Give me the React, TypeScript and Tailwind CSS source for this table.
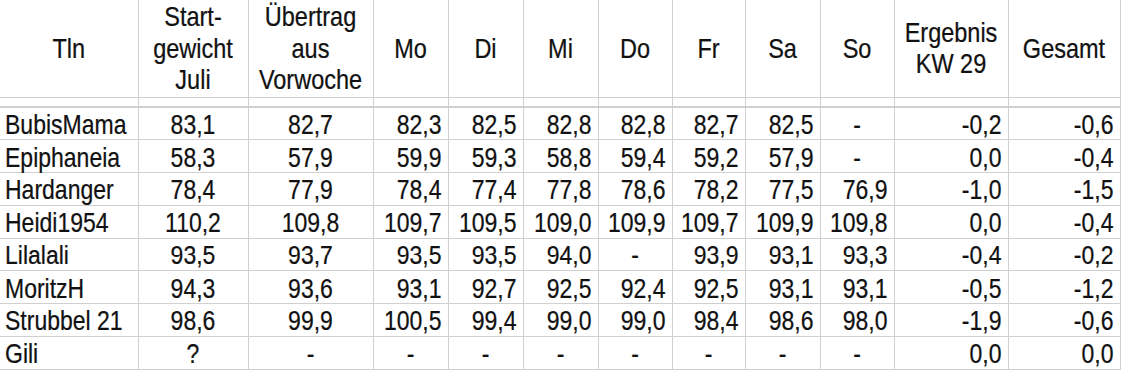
import React from 'react';

type Cell = string;

const widths = [138, 110, 125, 75, 75, 75, 74, 73, 75, 74, 114, 112];

const rows: Cell[][] = [
  ['BubisMama', '83,1', '82,7', '82,3', '82,5', '82,8', '82,8', '82,7', '82,5', '-', '-0,2', '-0,6'],
  ['Epiphaneia', '58,3', '57,9', '59,9', '59,3', '58,8', '59,4', '59,2', '57,9', '-', '0,0', '-0,4'],
  ['Hardanger', '78,4', '77,9', '78,4', '77,4', '77,8', '78,6', '78,2', '77,5', '76,9', '-1,0', '-1,5'],
  ['Heidi1954', '110,2', '109,8', '109,7', '109,5', '109,0', '109,9', '109,7', '109,9', '109,8', '0,0', '-0,4'],
  ['Lilalali', '93,5', '93,7', '93,5', '93,5', '94,0', '-', '93,9', '93,1', '93,3', '-0,4', '-0,2'],
  ['MoritzH', '94,3', '93,6', '93,1', '92,7', '92,5', '92,4', '92,5', '93,1', '93,1', '-0,5', '-1,2'],
  ['Strubbel 21', '98,6', '99,9', '100,5', '99,4', '99,0', '99,0', '98,4', '98,6', '98,0', '-1,9', '-0,6'],
  ['Gili', '?', '-', '-', '-', '-', '-', '-', '-', '-', '0,0', '0,0'],
];

const headers: React.ReactNode[] = [
  'Tln',
  <>Start-<br />gewicht<br />Juli</>,
  <>Übertrag<br />aus<br />Vorwoche</>,
  'Mo', 'Di', 'Mi', 'Do', 'Fr', 'Sa', 'So',
  <>Ergebnis<br />KW 29</>,
  'Gesamt',
];

function align(col: number, value: string) {
  if (col === 0) return 'text-left pl-[5px]';
  if (col === 1 || col === 2) return 'text-center';
  if (value === '-' || value === '?') return 'text-center';
  return 'text-right pr-[6px]';
}

export default function App() {
  return (
    <div className="w-[1123px] h-[372px] bg-white overflow-hidden font-['Liberation_Sans',Arial,sans-serif] text-[#111] [-webkit-text-stroke:0.2px_#111]">
      <table className="border-collapse table-fixed w-[1120px]">
        <colgroup>
          {widths.map((w, i) => (
            <col key={i} style={{ width: w }} />
          ))}
        </colgroup>
        <thead>
          <tr className="h-[97px]">
            {headers.map((h, i) => (
              <th
                key={i}
                className={`font-normal text-[23.5px] leading-[26px] text-center align-middle border-b border-[#d0d0d0] ${i > 0 ? 'border-l' : ''} ${i === 11 ? 'border-r' : ''}`}
              >
                <span className="inline-block scale-y-[1.2]">{h}</span>
              </th>
            ))}
          </tr>
          <tr className="h-[10px]">
            {widths.map((_, i) => (
              <th
                key={i}
                className={`border-b-2 border-[#d0d0d0] ${i > 0 ? 'border-l' : ''} ${i === 11 ? 'border-r' : ''}`}
              />
            ))}
          </tr>
        </thead>
        <tbody>
          {rows.map((r, ri) => (
            <tr key={ri} className="h-[32.75px]">
              {r.map((v, ci) => (
                <td
                  key={ci}
                  className={`text-[23px] leading-none whitespace-nowrap align-middle border-b border-[#d0d0d0] ${ci > 0 ? 'border-l' : ''} ${ci === 11 ? 'border-r' : ''} ${align(ci, v)}`}
                >
                  <span className="inline-block scale-y-[1.2] translate-y-[1px]">{v}</span>
                </td>
              ))}
            </tr>
          ))}
        </tbody>
      </table>
    </div>
  );
}
